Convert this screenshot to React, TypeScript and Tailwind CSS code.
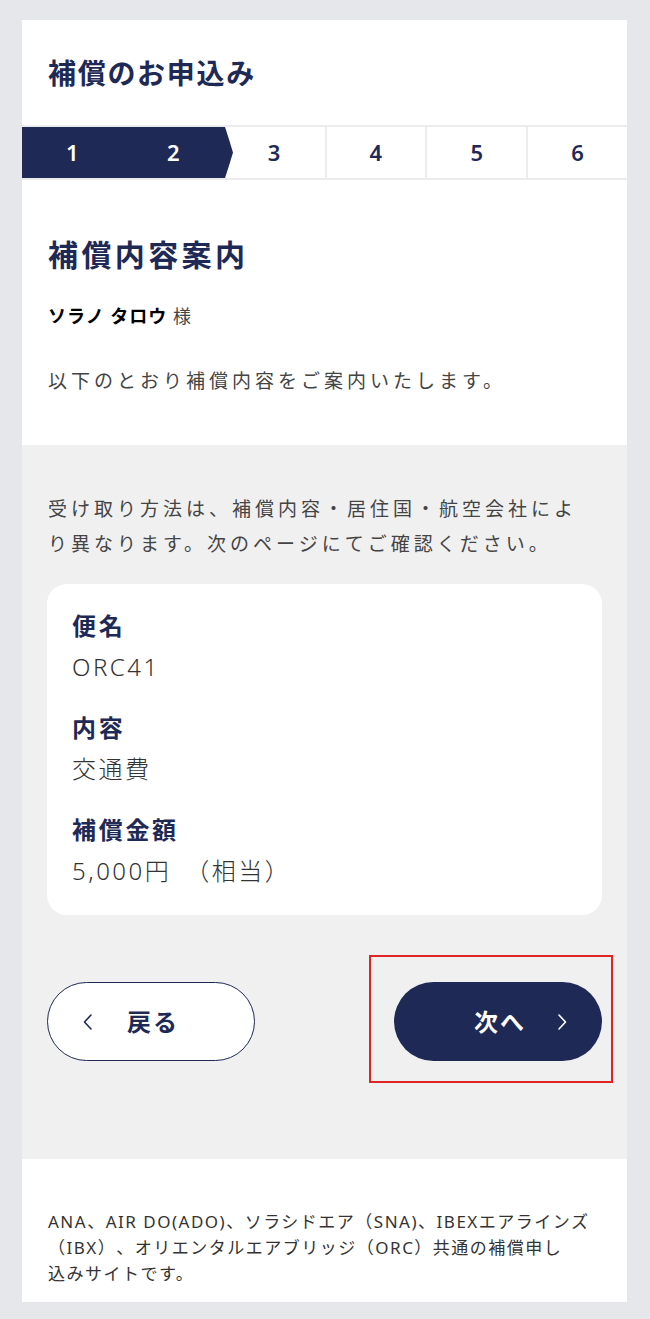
const navy = "text-[#1e2a55]";

function Stepper() {
  return (
    <div className="grid h-[55px] grid-cols-6 border-y-2 border-[#ececef] bg-white">
      <div className="relative col-span-2 grid grid-cols-2 bg-[#1e2a55] text-[22px] font-semibold text-white">
        <span className="flex items-center justify-center">1</span>
        <span className="flex items-center justify-center">2</span>
        <svg
          className="absolute top-0 left-full h-full w-[9px]"
          viewBox="0 0 9 51"
          preserveAspectRatio="none"
        >
          <path d="M0 0 H1 Q5 12 9 25.5 Q5 39 1 51 H0 Z" fill="#1e2a55" />
        </svg>
      </div>
      {["3", "4", "5", "6"].map((n, i) => (
        <span
          key={n}
          className={`flex items-center justify-center text-[22px] font-semibold ${navy} ${
            i > 0 ? "border-l-2 border-[#ececef]" : ""
          }`}
        >
          {n}
        </span>
      ))}
    </div>
  );
}

function Chevron({ dir, className }: { dir: "left" | "right"; className: string }) {
  return (
    <svg width="11" height="18" viewBox="0 0 11 18" className={className}>
      <polyline
        points={dir === "left" ? "9,2 2.5,9 9,16" : "2,2 8.5,9 2,16"}
        fill="none"
        stroke="currentColor"
        strokeWidth="1.6"
        strokeLinecap="round"
        strokeLinejoin="round"
      />
    </svg>
  );
}

function Field({ label, children }: { label: string; children: React.ReactNode }) {
  return (
    <div>
      <p className={`text-[24px] leading-[32px] font-bold tracking-[2.7px] ${navy}`}>
        {label}
      </p>
      <p className="mt-[8px] text-[24px] leading-[34px] font-light tracking-[2.5px] text-[#333]">
        {children}
      </p>
    </div>
  );
}

export default function App() {
  return (
    <div
      className="min-h-[1319px] bg-[#e6e7eb] pt-[20px]"
      style={{ fontFamily: '"Noto Sans", "Noto Sans CJK JP", sans-serif' }}
    >
      <div className="ml-[22px] w-[605px]">
        <header className="flex h-[105px] items-center bg-white px-[26px]">
          <h1 className={`text-[28px] font-bold tracking-[1.7px] ${navy}`}>
            補償のお申込み
          </h1>
        </header>

        <Stepper />

        <section className="bg-white px-[26px] pt-[55px] pb-[51px]">
          <h2 className={`text-[30px] leading-[40px] font-bold tracking-[3.4px] ${navy}`}>
            補償内容案内
          </h2>
          <p className="mt-[28px] text-[18px] leading-[26px] tracking-[1px] text-[#444]">
            <span className="font-bold text-black">ソラノ タロウ</span> 様
          </p>
          <p className="mt-[39px] text-[19px] leading-[26px] tracking-[4px] text-[#444]">
            以下のとおり補償内容をご案内いたします。
          </p>
        </section>

        <section className="bg-[#f0f0f1] px-[25px] pt-[47px] pb-[98px]">
          <p className="ml-px w-[540px] text-[19px] leading-[35px] tracking-[4px] text-[#444]">
            受け取り方法は、補償内容・居住国・航空会社により異なります。次のページにてご確認ください。
          </p>

          <div className="mt-[22px] flex flex-col gap-[28px] rounded-[20px] bg-white px-[25px] pt-[26px] pb-[27px]">
            <Field label="便名">ORC41</Field>
            <Field label="内容">交通費</Field>
            <Field label="補償金額">
              5,000円<span className="ml-[14px]">（相当）</span>
            </Field>
          </div>

          <div className="mt-[67px] flex items-center justify-between">
            <button className="flex h-[79px] w-[208px] items-center rounded-full border border-[#1e2a55] bg-white pl-[34px]">
              <Chevron dir="left" className={navy} />
              <span className={`ml-[34px] text-[24px] font-bold tracking-[2px] ${navy}`}>
                戻る
              </span>
            </button>

            <div className="relative">
              <button className="flex h-[79px] w-[208px] items-center justify-end rounded-full bg-[#1e2a55] pr-[34px]">
                <span className="text-[24px] font-bold tracking-[2px] text-white">次へ</span>
                <Chevron dir="right" className="ml-[31px] text-white" />
              </button>
              <div className="pointer-events-none absolute -top-[27px] -right-[11px] -bottom-[22px] -left-[25px] border-2 border-[#e02424]" />
            </div>
          </div>
        </section>

        <footer className="bg-white px-[26px] pt-[50px] pb-[15px]">
          <p className="text-[17px] leading-[26px] tracking-[1.5px] text-[#333] [text-spacing-trim:space-all]">
            ANA、AIR DO(ADO)、ソラシドエア（SNA)、IBEXエアラインズ（IBX）、オリエンタルエアブリッジ（ORC）共通の補償申し
            <br />
            込みサイトです。
          </p>
        </footer>
      </div>
    </div>
  );
}
